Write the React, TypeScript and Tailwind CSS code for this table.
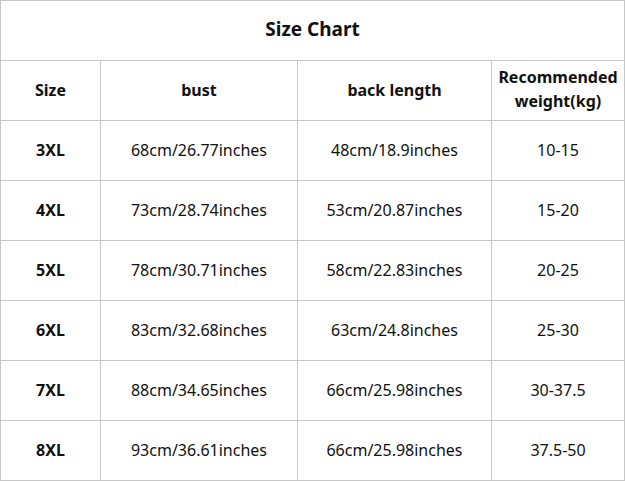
import React from 'react';

const rows = [
  ['3XL', '68cm/26.77inches', '48cm/18.9inches', '10-15'],
  ['4XL', '73cm/28.74inches', '53cm/20.87inches', '15-20'],
  ['5XL', '78cm/30.71inches', '58cm/22.83inches', '20-25'],
  ['6XL', '83cm/32.68inches', '63cm/24.8inches', '25-30'],
  ['7XL', '88cm/34.65inches', '66cm/25.98inches', '30-37.5'],
  ['8XL', '93cm/36.61inches', '66cm/25.98inches', '37.5-50'],
];

const cell = 'h-[60px] pb-[2px] flex items-center justify-center text-center border-r border-b border-[#c8c8c8]';

const App = () => {
  return (
    <div className="w-[625px] h-[481px] bg-white text-[#111] font-['Noto_Sans',sans-serif]">
      <div className="grid grid-cols-[100px_197px_194px_133px] border-l border-t border-[#c8c8c8]">
        {/* Title */}
        <div className={`${cell} col-span-4 text-[19px] font-bold`}>Size Chart</div>

        {/* Header */}
        <div className={`${cell} text-[16px] font-bold`}>Size</div>
        <div className={`${cell} text-[16px] font-bold`}>bust</div>
        <div className={`${cell} text-[16px] font-bold`}>back length</div>
        <div className={`${cell} text-[16px] font-bold leading-[24px] pb-[4px]`}>
          Recommended
          <br />
          weight(kg)
        </div>

        {/* Data */}
        {rows.map((r, i) => (
          <React.Fragment key={i}>
            <div className={`${cell} text-[16px] font-bold`}>{r[0]}</div>
            <div className={`${cell} text-[16px]`}>{r[1]}</div>
            <div className={`${cell} text-[16px]`}>{r[2]}</div>
            <div className={`${cell} text-[16px]`}>{r[3]}</div>
          </React.Fragment>
        ))}
      </div>
    </div>
  );
};

export default App;
